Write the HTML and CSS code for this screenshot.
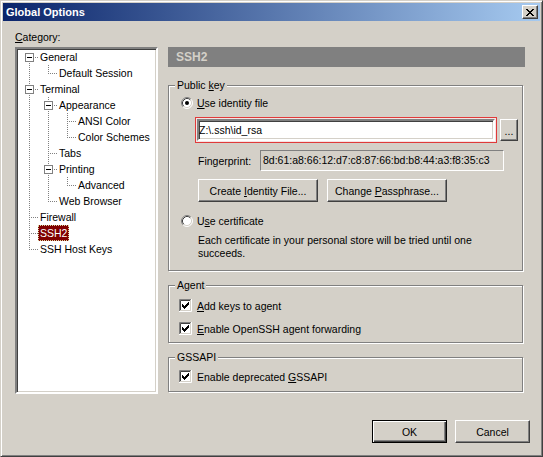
FILE: index.html
```html
<!DOCTYPE html>
<html>
<head>
<meta charset="utf-8">
<title>Global Options</title>
<link rel="stylesheet" href="styles.css">
</head>
<body>
<svg class="svgdefs" width="0" height="0">
  <defs>
    <symbol id="pipe" viewBox="0 0 19 16">
      <line x1="10.5" y1="0" x2="10.5" y2="16" stroke="#808080" stroke-dasharray="1 1"/>
    </symbol>
    <symbol id="tee" viewBox="0 0 19 16">
      <line x1="10.5" y1="0" x2="10.5" y2="16" stroke="#808080" stroke-dasharray="1 1"/>
      <line x1="12" y1="8.5" x2="19" y2="8.5" stroke="#808080" stroke-dasharray="1 1"/>
    </symbol>
    <symbol id="ell" viewBox="0 0 19 16">
      <line x1="10.5" y1="0" x2="10.5" y2="9" stroke="#808080" stroke-dasharray="1 1"/>
      <line x1="12" y1="8.5" x2="19" y2="8.5" stroke="#808080" stroke-dasharray="1 1"/>
    </symbol>
    <symbol id="boxfirst" viewBox="0 0 19 16">
      <line x1="10.5" y1="14" x2="10.5" y2="16" stroke="#808080" stroke-dasharray="1 1"/>
      <line x1="16" y1="8.5" x2="19" y2="8.5" stroke="#808080" stroke-dasharray="1 1"/>
      <rect x="6.5" y="4.5" width="8" height="8" fill="#fff" stroke="#808080"/>
      <path d="M8 8h5v1H8z" fill="#000"/>
    </symbol>
    <symbol id="boxmid" viewBox="0 0 19 16">
      <line x1="10.5" y1="0" x2="10.5" y2="4" stroke="#808080" stroke-dasharray="1 1"/>
      <line x1="10.5" y1="14" x2="10.5" y2="16" stroke="#808080" stroke-dasharray="1 1"/>
      <line x1="16" y1="8.5" x2="19" y2="8.5" stroke="#808080" stroke-dasharray="1 1"/>
      <rect x="6.5" y="4.5" width="8" height="8" fill="#fff" stroke="#808080"/>
      <path d="M8 8h5v1H8z" fill="#000"/>
    </symbol>
    <symbol id="chk" viewBox="0 0 13 13">
      <path d="M0.5 12V0.5H12" fill="none" stroke="#808080"/>
      <path d="M0 12.5H12.5V0" fill="none" stroke="#fff"/>
      <path d="M1.5 11V1.5H11" fill="none" stroke="#404040"/>
      <path d="M1 11.5H11.5V1" fill="none" stroke="#d4d0c8"/>
      <rect x="2" y="2" width="9" height="9" fill="#fff"/>
      <path d="M3 5h1v3H3z M4 6h1v3H4z M5 7h1v3H5z M6 6h1v3H6z M7 5h1v3H7z M8 4h1v3H8z M9 3h1v3H9z" fill="#000"/>
    </symbol>
    <symbol id="radio" viewBox="0 0 12 12">
      <circle cx="6" cy="6" r="5" fill="#fff"/>
      <path d="M2.11 9.89A5.5 5.5 0 0 1 9.89 2.11" fill="none" stroke="#808080"/>
      <path d="M9.89 2.11A5.5 5.5 0 0 1 2.11 9.89" fill="none" stroke="#fff"/>
      <path d="M2.82 9.18A4.5 4.5 0 0 1 9.18 2.82" fill="none" stroke="#404040"/>
      <path d="M9.18 2.82A4.5 4.5 0 0 1 2.82 9.18" fill="none" stroke="#d4d0c8"/>
    </symbol>
  </defs>
</svg>

<div class="window">
  <div class="titlebar">
    <span class="title">Global Options</span>
    <span class="close">
      <svg width="8" height="7" viewBox="0 0 8 7"><path d="M0 0h2v1H0z M6 0h2v1H6z M1 1h2v1H1z M5 1h2v1H5z M2 2h4v1H2z M3 3h2v1H3z M2 4h4v1H2z M1 5h2v1H1z M5 5h2v1H5z M0 6h2v1H0z M6 6h2v1H6z" fill="#000"/></svg>
    </span>
  </div>

  <div class="content">
    <div class="main">
      <div class="leftcol">
        <div class="cat-label"><u>C</u>ategory:</div>
        <div class="tree">
          <div class="row"><svg class="cell"><use href="#boxfirst"/></svg><span class="label">General</span></div>
          <div class="row"><svg class="cell"><use href="#pipe"/></svg><svg class="cell"><use href="#ell"/></svg><span class="label">Default Session</span></div>
          <div class="row"><svg class="cell"><use href="#boxmid"/></svg><span class="label">Terminal</span></div>
          <div class="row"><svg class="cell"><use href="#pipe"/></svg><svg class="cell"><use href="#boxmid"/></svg><span class="label">Appearance</span></div>
          <div class="row"><svg class="cell"><use href="#pipe"/></svg><svg class="cell"><use href="#pipe"/></svg><svg class="cell"><use href="#tee"/></svg><span class="label">ANSI Color</span></div>
          <div class="row"><svg class="cell"><use href="#pipe"/></svg><svg class="cell"><use href="#pipe"/></svg><svg class="cell"><use href="#ell"/></svg><span class="label">Color Schemes</span></div>
          <div class="row"><svg class="cell"><use href="#pipe"/></svg><svg class="cell"><use href="#tee"/></svg><span class="label">Tabs</span></div>
          <div class="row"><svg class="cell"><use href="#pipe"/></svg><svg class="cell"><use href="#boxmid"/></svg><span class="label">Printing</span></div>
          <div class="row"><svg class="cell"><use href="#pipe"/></svg><svg class="cell"><use href="#pipe"/></svg><svg class="cell"><use href="#ell"/></svg><span class="label">Advanced</span></div>
          <div class="row"><svg class="cell"><use href="#pipe"/></svg><svg class="cell"><use href="#ell"/></svg><span class="label">Web Browser</span></div>
          <div class="row"><svg class="cell"><use href="#tee"/></svg><span class="label">Firewall</span></div>
          <div class="row"><svg class="cell"><use href="#tee"/></svg><span class="label sel">SSH2</span></div>
          <div class="row"><svg class="cell"><use href="#ell"/></svg><span class="label">SSH Host Keys</span></div>
        </div>
      </div>

      <div class="rightcol">
        <div class="header">SSH2</div>

        <div class="group pk">
          <div class="legend">Public <u>k</u>ey</div>
          <div class="opt-row first">
            <svg class="radio" width="12" height="12"><use href="#radio"/><circle cx="6" cy="6" r="2" fill="#000"/></svg>
            <span><u>U</u>se identity file</span>
          </div>
          <div class="keyrow">
            <div class="keywrap"><div class="keyinput">Z:\.ssh\id_rsa</div></div>
            <div class="btn browse"><span>...</span></div>
          </div>
          <div class="fprow">
            <span class="fp-label">Fingerprint:</span>
            <div class="fp-field">8d:61:a8:66:12:d7:c8:87:66:bd:b8:44:a3:f8:35:c3</div>
          </div>
          <div class="btnrow">
            <div class="btn wide"><span>Create <u>I</u>dentity File...</span></div>
            <div class="btn wide"><span>Change <u>P</u>assphrase...</span></div>
          </div>
          <div class="opt-row second">
            <svg class="radio" width="12" height="12"><use href="#radio"/></svg>
            <span>U<u>s</u>e certificate</span>
          </div>
          <div class="desc">Each certificate in your personal store will be tried until one<br>succeeds.</div>
        </div>

        <div class="group agent">
          <div class="legend">Agent</div>
          <div class="check-row first">
            <svg class="check" width="13" height="13"><use href="#chk"/></svg>
            <span><u>A</u>dd keys to agent</span>
          </div>
          <div class="check-row second">
            <svg class="check" width="13" height="13"><use href="#chk"/></svg>
            <span><u>E</u>nable OpenSSH agent forwarding</span>
          </div>
        </div>

        <div class="group gss">
          <div class="legend">GSSAPI</div>
          <div class="check-row gfirst">
            <svg class="check" width="13" height="13"><use href="#chk"/></svg>
            <span>Enable deprecated <u>G</u>SSAPI</span>
          </div>
        </div>
      </div>
    </div>

    <div class="dlg-buttons">
      <div class="btn dlg default"><span>OK</span></div>
      <div class="btn dlg"><span>Cancel</span></div>
    </div>
  </div>
</div>
</body>
</html>
```

FILE: styles.css
```css
* { box-sizing: border-box; }

html, body {
  margin: 0;
  padding: 0;
  background: #d4d0c8;
}

.svgdefs {
  display: block;
  width: 0;
  height: 0;
  overflow: hidden;
}

.window {
  width: 543px;
  height: 457px;
  border: 1px solid;
  border-color: #d4d0c8 #404040 #404040 #d4d0c8;
  box-shadow: inset 1px 1px 0 #fff, inset -1px -1px 0 #808080;
  padding: 2px;
  background: #d4d0c8;
  font-family: "Liberation Sans", Arial, sans-serif;
  font-size: 10.5px;
  color: #000;
  display: flex;
  flex-direction: column;
}

u { text-decoration: underline; text-underline-offset: 1px; }

/* title bar */
.titlebar {
  height: 18px;
  flex: none;
  background: linear-gradient(to right, #0a246a, #a6caf0);
  display: flex;
  align-items: center;
  justify-content: space-between;
  padding: 0 2px 0 3px;
}
.title {
  color: #fff;
  font-weight: bold;
  font-size: 11px;
}
.close {
  width: 16px;
  height: 14px;
  background: #d4d0c8;
  border: 1px solid;
  border-color: #fff #404040 #404040 #fff;
  box-shadow: inset -1px -1px 0 #808080;
  display: flex;
  align-items: center;
  justify-content: center;
}
.close svg { display: block; }

/* content */
.content {
  flex: 1;
  padding: 10px 0 0 12px;
}
.main {
  display: flex;
  align-items: flex-start;
}
.leftcol { width: 143px; flex: none; }
.cat-label {
  height: 13px;
  line-height: 13px;
  margin-bottom: 3px;
}

/* tree */
.tree {
  height: 347px;
  background: #fff;
  border: 2px solid;
  border-color: #808080 #fff #fff #808080;
  box-shadow: inset 1px 1px 0 #404040, inset -1px -1px 0 #d4d0c8;
  padding-left: 2px;
}
.row {
  display: flex;
  align-items: center;
  height: 16px;
}
.cell {
  display: block;
  width: 19px;
  height: 16px;
  flex: none;
}
.label {
  height: 16px;
  line-height: 14px;
  padding: 0 1px;
  border: 1px solid transparent;
  white-space: nowrap;
}
.label.sel {
  background: #800000;
  color: #fff;
  border: 1px dotted #d8d8a0;
}

/* right column */
.rightcol {
  width: 357px;
  margin-left: 10px;
  padding-top: 16px;
  flex: none;
}
.header {
  height: 20px;
  line-height: 20px;
  background: #808080;
  color: #d4d0c8;
  font-weight: bold;
  font-size: 12px;
  padding-left: 8px;
}

.group {
  width: 355px;
  border: 1px solid #808080;
  box-shadow: 1px 1px 0 #fff, inset 1px 1px 0 #fff;
}
.pk { margin-top: 18px; height: 186px; }
.agent { margin-top: 14px; height: 58px; }
.gss { margin-top: 14px; height: 35px; }

.legend {
  width: fit-content;
  height: 13px;
  line-height: 13px;
  margin: -7px 0 0 6px;
  padding: 0 2px;
  background: #d4d0c8;
}

.opt-row {
  display: flex;
  align-items: center;
  gap: 4px;
  height: 14px;
  padding-left: 12px;
}
.opt-row.first { margin-top: 4px; }
.opt-row.second { margin-top: 12px; }
.radio { display: block; flex: none; }

.keyrow {
  display: flex;
  align-items: center;
  margin-top: 7px;
  padding-left: 26px;
}
.keywrap {
  width: 302px;
  height: 26px;
  border: 1px solid #e03a3a;
  padding: 1px;
  background: #f4e4e4;
}
.keyinput {
  height: 100%;
  background: #fff;
  border: 2px solid;
  border-color: #808080 #fff #fff #808080;
  box-shadow: inset 1px 1px 0 #404040, inset -1px -1px 0 #d4d0c8;
  line-height: 18px;
  padding-left: 0;
  white-space: nowrap;
}

.btn {
  background: #d4d0c8;
  border: 1px solid;
  border-color: #fff #404040 #404040 #fff;
  box-shadow: inset -1px -1px 0 #808080;
  display: flex;
  align-items: center;
  justify-content: center;
  white-space: nowrap;
}
.browse {
  width: 18px;
  height: 22px;
  margin-left: 3px;
  padding-top: 2px;
}

.fprow {
  display: flex;
  align-items: center;
  height: 21px;
  margin-top: 7px;
  padding-left: 29px;
}
.fp-label { width: 62px; flex: none; }
.fp-field {
  width: 244px;
  height: 21px;
  border: 1px solid;
  border-color: #808080 #fff #fff #808080;
  line-height: 19px;
  padding-left: 2px;
  white-space: nowrap;
}

.btnrow {
  display: flex;
  gap: 9px;
  margin-top: 8px;
  padding-left: 29px;
}
.btn.wide { width: 120px; height: 23px; }

.desc {
  margin-top: 6px;
  padding-left: 29px;
  line-height: 13px;
  white-space: nowrap;
}

.check-row {
  display: flex;
  align-items: center;
  gap: 5px;
  height: 13px;
  padding-left: 10px;
}
.check-row.first { margin-top: 7px; }
.check-row.second { margin-top: 10px; }
.check-row.gfirst { margin-top: 6px; }
.check { display: block; flex: none; }

/* dialog buttons */
.dlg-buttons {
  display: flex;
  justify-content: flex-end;
  gap: 8px;
  margin-top: 26px;
  padding-right: 10px;
}
.btn.dlg { width: 75px; height: 23px; }
.btn.default {
  border: 1px solid #000;
  box-shadow: inset 1px 1px 0 #fff, inset -1px -1px 0 #404040, inset -2px -2px 0 #808080;
}
```
